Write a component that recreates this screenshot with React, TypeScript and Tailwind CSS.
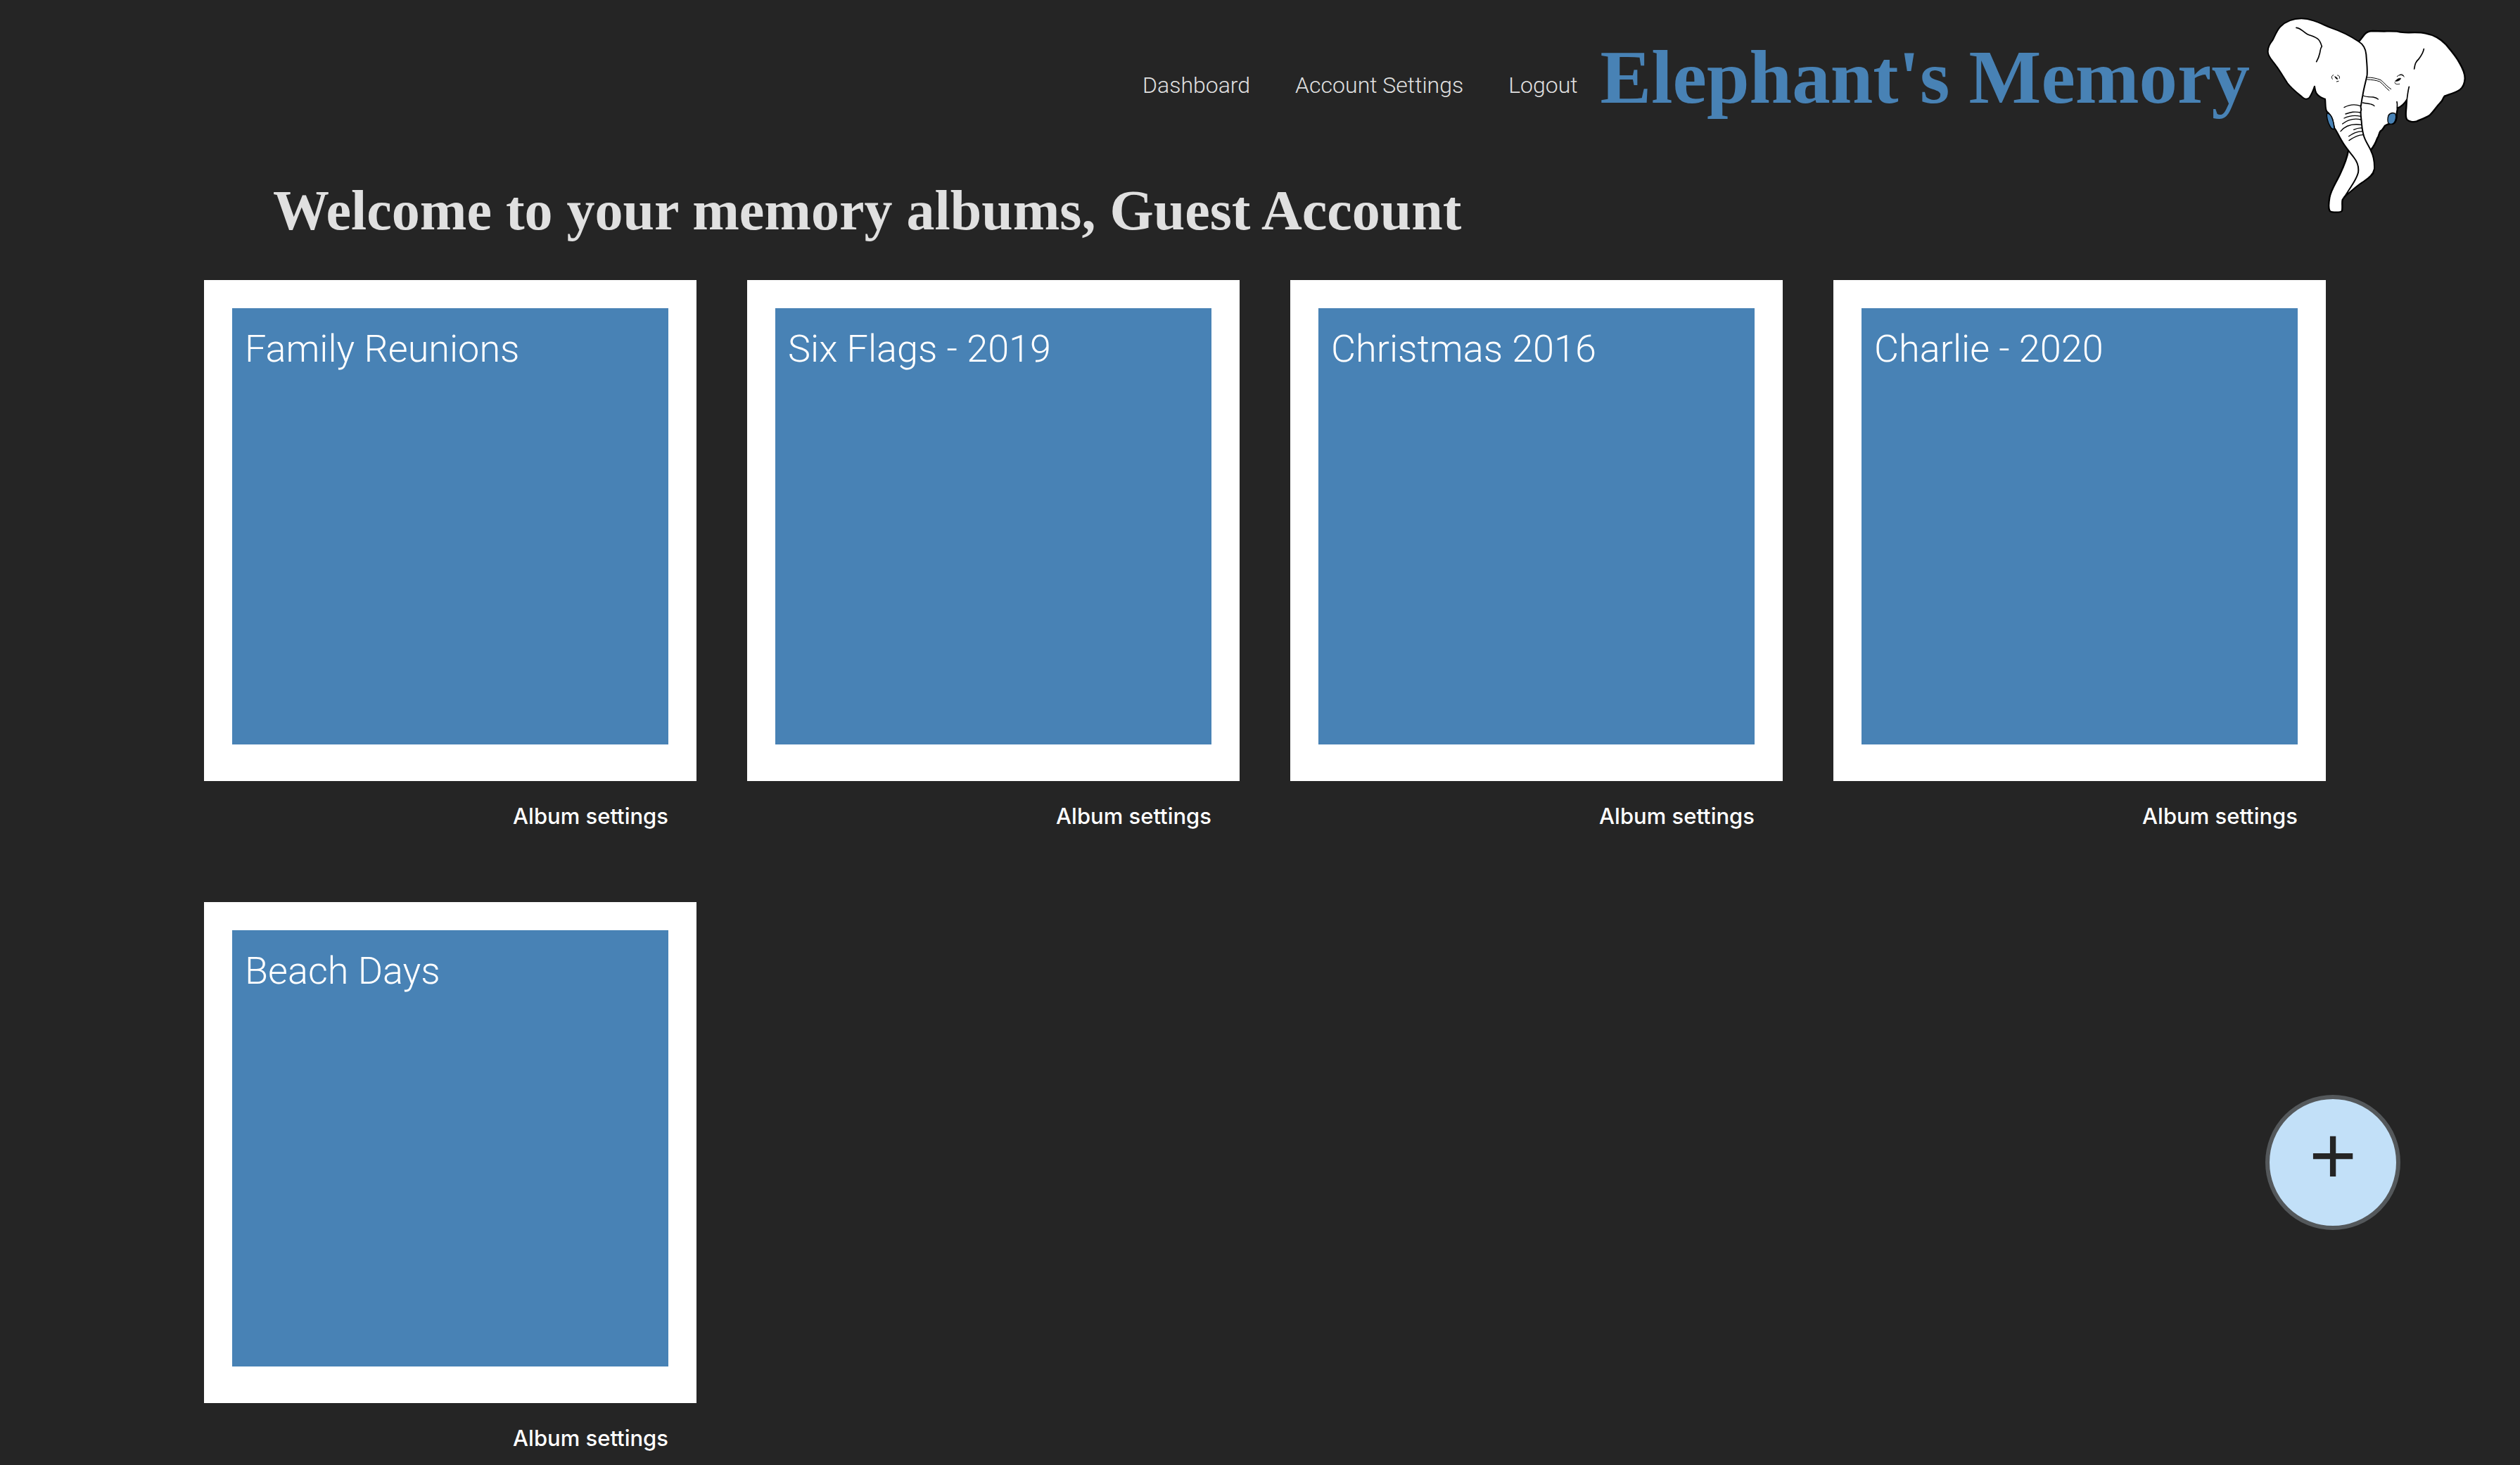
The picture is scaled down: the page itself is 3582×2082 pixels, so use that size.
const albums = [
  "Family Reunions",
  "Six Flags - 2019",
  "Christmas 2016",
  "Charlie - 2020",
  "Beach Days",
];

function ElephantLogo() {
  return (
    <svg
      viewBox="60 36 864 852"
      className="h-[284px] w-[288px] shrink-0"
      role="img"
      aria-label="Two elephants with entwined trunks"
      stroke="#000"
      strokeLinecap="round"
      strokeLinejoin="round"
      fill="none"
    >
      <path
        d="M458 147C470 138 476 122 488 112C497 104 504 102 518 102C560 105 590 102 622 104C640 110 655 107 670 109C700 108 722 107 742 112C776 118 806 134 830 160C850 184 872 208 888 238C902 262 912 286 911 305C910 326 906 340 890 352C870 366 845 372 824 380C816 390 818 398 806 408C790 424 778 446 760 462C742 474 722 479 706 487C690 492 672 488 664 480C656 470 659 450 661 430L663 396C652 414 640 424 624 431L620 455C622 476 616 494 602 498C588 496 578 500 570 506C564 514 562 524 550 530C544 538 545 550 538 558C530 580 522 596 509 610L440 560L400 300Z"
        fill="#fff"
        strokeWidth="7"
      />
      <path d="M673 340C667 362 666 384 663 400M621 404C624 414 622 422 622 431" strokeWidth="5" />
      <path
        d="M585 462C592 452 604 450 614 454C620 466 616 484 608 494C600 500 590 500 585 495C580 486 582 472 585 462Z"
        fill="#4882b5"
        strokeWidth="4"
      />
      <path
        d="M414 612C408 650 394 680 378 714C360 752 340 780 334 812C330 836 328 856 334 868C338 876 346 875 358 875C372 875 382 876 387 869C390 852 386 836 389 822C398 806 416 788 440 768C466 748 500 736 520 708L480 620Z"
        fill="#fff"
        strokeWidth="7"
      />
      <path
        d="M458 147C476 158 488 180 490 202C492 234 496 262 494 290C488 320 480 345 475 378C470 400 470 412 467 424C466 432 472 436 467 444C466 462 470 480 471 500C473 520 474 530 480 550C488 576 502 592 510 612C522 636 526 664 525 690C520 716 498 730 476 746C450 762 426 786 402 804C420 770 448 740 456 706C460 680 452 660 438 642C420 618 400 596 386 570C372 548 366 530 355 516L346 478C340 462 330 452 322 445C314 430 318 410 315 392C300 388 286 380 278 368C272 358 272 350 270 338C264 356 256 374 248 386C240 394 228 394 220 386C196 366 172 348 154 324C138 300 120 268 104 248C90 228 72 212 71 192C70 170 80 156 92 140C100 124 110 98 124 84C148 60 176 49 214 49C262 50 298 72 338 88C380 102 424 124 458 147Z"
        fill="#fff"
        strokeWidth="6"
      />
      <path
        d="M323 452C332 454 342 464 346 478C352 492 352 506 354 520C346 522 340 516 336 508C326 492 320 466 323 452Z"
        fill="#4882b5"
        strokeWidth="4"
      />
      <path
        d="M192 88C214 90 222 108 240 116C258 124 274 126 286 138C294 146 298 158 301 168C292 178 296 190 290 204C288 216 282 224 278 233"
        strokeWidth="5"
      />
      <path d="M736 179C732 200 722 210 714 222C700 234 698 244 695 264" strokeWidth="5" />
      <path
        d="M495 300C515 300 535 304 552 311C566 322 580 340 596 350M494 309C516 310 532 312 548 318C564 330 574 346 588 356"
        strokeWidth="3"
      />
      <path
        d="M478 378C490 384 505 383 520 384C530 386 536 388 541 393M475 408C488 412 500 410 510 414C518 416 522 418 525 422"
        strokeWidth="4"
      />
      <path
        d="M467 422C440 412 418 416 396 428M467 450C440 444 424 448 402 456M467 466C440 460 416 464 396 474M468 480C440 474 412 480 389 498M470 502C430 496 400 506 381 530M472 516C458 514 448 518 437 523M473 530C450 530 434 540 416 551M477 545C455 544 436 556 417 569"
        strokeWidth="4"
      />
      <path
        d="M350 290C342 293 341 300 346 307M368 291C376 292 378 298 376 304M372 316L364 318M622 296C630 288 642 286 652 297M632 290C640 284 648 288 650 294M612 322C614 330 622 330 632 328"
        strokeWidth="3"
      />
      <path d="M356 296C362 296 368 302 369 308C362 308 358 302 356 296Z" fill="#000" strokeWidth="1" />
      <path d="M614 316C620 308 630 302 638 304C636 312 624 318 614 316Z" fill="#000" strokeWidth="2" />
    </svg>
  );
}

export default function App() {
  return (
    <div className="min-h-screen bg-[#252525] font-['Roboto',sans-serif] text-[#e0e0e0]">
      <header className="flex h-[247px] items-start justify-end pr-[74px] pt-[22px]">
        <nav className="mr-8 mt-[79px] flex gap-16 text-[32px] leading-10 font-[350]">
          <a href="#dashboard">Dashboard</a>
          <a href="#account">Account Settings</a>
          <a href="#logout">Logout</a>
        </nav>
        <div className="mr-[22px] mt-[26px] font-['Liberation_Serif',serif] text-[109px] leading-[124px] font-bold text-[#4882b5]">
          Elephant's Memory
        </div>
        <ElephantLogo />
      </header>
      <main>
        <h1 className="pl-[388px] font-['Liberation_Serif',serif] text-[80px] leading-[104px] font-bold">
          Welcome to your memory albums, Guest Account
        </h1>
        <ul className="mt-[47px] flex flex-wrap gap-x-[72px] gap-y-[102px] pr-[200px] pl-[290px]">
          {albums.map((name) => (
            <li key={name} className="w-[700px] text-white">
              <a href="#album" className="block bg-white px-10 pt-10 pb-[52px]">
                <h2 className="aspect-square bg-[#4882b5] px-[18px] pt-[25px] text-[54px] leading-[66px] font-[350]">
                  {name}
                </h2>
              </a>
              <div className="flex justify-end px-10 pt-[30px]">
                <a href="#settings" className="font-['Inter',sans-serif] text-[31px] leading-10 font-medium">
                  Album settings
                </a>
              </div>
            </li>
          ))}
        </ul>
      </main>
      <button
        type="button"
        aria-label="Add album"
        className="fixed right-[170px] bottom-[334px] flex size-[192px] items-center justify-center rounded-full border-6 border-[#54585b] bg-[#c2e0f8] pb-5 font-['Liberation_Sans',sans-serif] text-[116px] leading-none text-[#252525]"
      >
        +
      </button>
    </div>
  );
}
